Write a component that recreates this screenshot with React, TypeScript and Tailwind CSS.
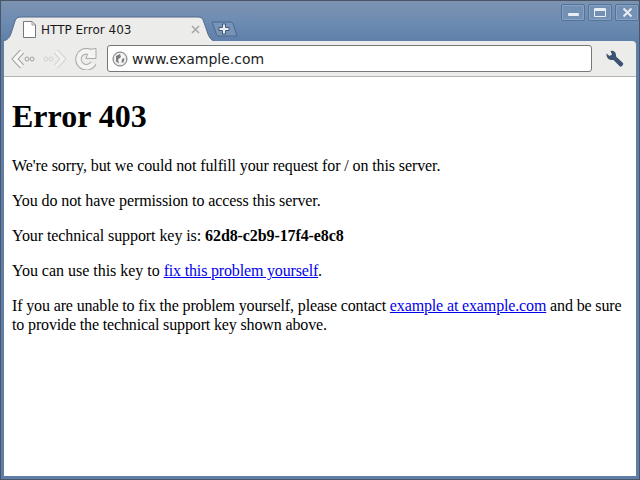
// Old Chrome on Linux showing a 403 error page.

function WinButton({ children }: { children: React.ReactNode }) {
  return (
    <div className="w-[24px] h-[17px] rounded-[2px] border border-[#54729a] bg-[#7391b5] shadow-[inset_0_0_0_1px_#88a2c2] flex items-center justify-center">
      {children}
    </div>
  );
}

function NavArrow({ flip, edge, fill }: { flip?: boolean; edge: string; fill: string }) {
  return (
    <svg width="26" height="22" viewBox="0 0 26 22" className={flip ? '-scale-x-100' : ''}>
      <path d="M12 3.5 L5 11 L12 18.5" fill="none" stroke={edge} strokeWidth="5.5" />
      <path d="M12 3.5 L5 11 L12 18.5" fill="none" stroke={fill} strokeWidth="3.5" />
      <circle cx="17" cy="11" r="2" fill="none" stroke={edge} />
      <circle cx="22" cy="11" r="2" fill="none" stroke={edge} />
    </svg>
  );
}

export default function App() {
  return (
    <div className="w-[640px] h-[480px] overflow-hidden flex flex-col border border-[#4a5568] bg-[#5f7fa8]">
      <div className="relative h-[40px] shrink-0 bg-gradient-to-b from-[#7d92b0] via-[#6d8cb2] to-[#5f80aa]">
        <div className="flex justify-end gap-[3px] pt-[3px]">
          <WinButton><div className="w-[11px] h-[3px] bg-[#e8edf3] rounded-[1px] mt-[3px]" /></WinButton>
          <WinButton><div className="w-[12px] h-[9px] border border-t-[3px] border-[#e8edf3] rounded-[1px]" /></WinButton>
          <WinButton>
            <svg width="11" height="11" viewBox="0 0 11 11"><path d="M1.5 1.5 L9.5 9.5 M9.5 1.5 L1.5 9.5" stroke="#e8edf3" strokeWidth="2" /></svg>
          </WinButton>
        </div>
        {/* tab and new-tab button sit on the bottom edge of the title bar */}
        <svg width="240" height="25" viewBox="0 0 240 25" className="absolute left-0 bottom-0">
          <path d="M2 25 C7 24 9 21 10.5 16 L14 5 C15 2 17 1 20 1 L197 1 C200 1 201.500 2 202.500 5 L207 18 C209 23 211 24.500 214 25" fill="#ececea" stroke="#54698a" strokeWidth="1" />
          <path d="M211 6 L229 6 C231 6 232 7 232.500 9 L236 20 L218 20 C216 20 215.500 19 215 17 Z" fill="#7693b8" stroke="#4d6788" strokeWidth="1" />
          <path d="M221.500 8 h3 v3.500 h3.500 v3 h-3.500 v3.500 h-3 v-3.500 h-3.500 v-3 h3.500 Z" fill="#e8edf3" stroke="#46597a" strokeWidth="1" />
        </svg>
        <div className="absolute left-[21px] top-[20px] flex items-center gap-[4px] w-[178px]">
          <svg width="15" height="17" viewBox="0 0 15 17">
            <path d="M1.500 0.500 H10 L13.500 4 V16.500 H1.500 Z" fill="#fff" stroke="#777" />
            <path d="M10 0.500 V4 H13.500" fill="none" stroke="#999" />
          </svg>
          <span className="text-[12px] leading-[16px] text-[#1a1a1a] font-['DejaVu_Sans',sans-serif] whitespace-nowrap">HTTP Error 403</span>
          <svg width="9" height="9" viewBox="0 0 9 9" className="ml-auto">
            <path d="M1 1 L8 8 M8 1 L1 8" stroke="#a8a8a8" strokeWidth="1.6" />
          </svg>
        </div>
      </div>

      <div className="flex-1 min-h-0 flex flex-col px-[3px] pb-[3px]">
        <div className="h-[36px] shrink-0 bg-[#ececea] rounded-tr-[4px] border-b border-[#b5b5b3] flex items-center pl-[6px] pr-[12px]">
          <NavArrow edge="#a0a09e" fill="#f6f6f4" />
          <div className="ml-[6px]"><NavArrow flip edge="#d2d2d0" fill="#f2f2f0" /></div>
          <svg width="22" height="22" viewBox="0 0 22 22" className="ml-[7px]">
            <path d="M17.500 6 A8 8 0 1 0 18.500 15" fill="none" stroke="#a9a9a7" strokeWidth="6.500" />
            <path d="M14 1.500 L21 0.500 L21 10.500 L11 10.500 Z" fill="#f4f4f2" stroke="#a9a9a7" />
            <path d="M17.500 6 A8 8 0 1 0 18.500 15" fill="none" stroke="#f4f4f2" strokeWidth="4.500" />
          </svg>
          <div className="ml-[10px] flex-1 h-[27px] bg-white border border-[#777] rounded-[3px] flex items-center pl-[4px]">
            <svg width="16" height="16" viewBox="0 0 16 16">
              <circle cx="8" cy="8" r="7" fill="#e4e6e8" stroke="#777" />
              <circle cx="8" cy="8" r="5.500" fill="#f4f5f6" />
              <path d="M4 5 L8 3 L9 6 L6 8.500 L7 12.500 L4 10.500 Z M10 8 L12.500 7 L11.500 11.500 L9.500 11.500 Z" fill="#7c7c7c" />
            </svg>
            <span className="ml-[4px] text-[14px] leading-[18px] text-[#222] font-['DejaVu_Sans',sans-serif]">www.example.com</span>
          </div>
          <svg width="18" height="18" viewBox="0 0 18 18" className="ml-[14px]">
            <path d="M0.500 3.500 L3.500 6 L6 4.500 L4.500 1 C7.500 0 10 2 10 5 C10 6 10 6.500 10.500 7 L17 13 C18 14.500 15.500 17.500 14 16.500 L7.500 10 C7 9.800 6 10 5 10 C2.500 10 0 6.500 0.500 3.500 Z" fill="#3d5273" />
          </svg>
        </div>

        <div className="flex-1 bg-white px-[8px] font-['Liberation_Serif',serif] text-[16px] leading-[19px] tracking-[-0.1px] text-black overflow-hidden">
          <h1 className="mt-[21px] mb-[21px] text-[32px] leading-[37px] tracking-normal font-bold">Error 403</h1>
          <p className="mb-[16px]">We're sorry, but we could not fulfill your request for / on this server.</p>
          <p className="mb-[16px]">You do not have permission to access this server.</p>
          <p className="mb-[16px] tracking-[-0.07px]">Your technical support key is: <b className="tracking-[-0.1px]">62d8-c2b9-17f4-e8c8</b></p>
          <p className="mb-[16px] tracking-[-0.02px]">You can use this key to <a href="#" className="text-[#0000ee] underline tracking-[-0.17px]">fix this problem yourself</a>.</p>
          <p className="tracking-[-0.14px]">If you are unable to fix the problem yourself, please contact <a href="#" className="text-[#0000ee] underline">example at example.com</a> and be sure to provide the technical support key shown above.</p>
        </div>
      </div>
    </div>
  );
}
